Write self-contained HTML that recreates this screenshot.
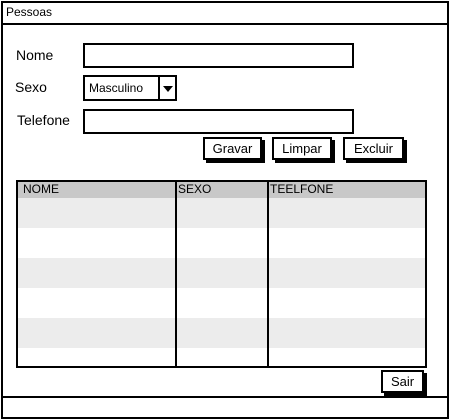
<!DOCTYPE html>
<html><head><style>
*{margin:0;padding:0;box-sizing:border-box}
body{width:450px;height:420px;background:#fff;position:relative;font-family:"Liberation Sans",sans-serif;overflow:hidden;color:#000}
.a{position:absolute}
.box{position:absolute;border:2px solid #000;background:#fff}
.btn{position:absolute;border:2px solid #000;background:#fff;box-shadow:3px 3px 0 #000;font-size:13px;text-align:center;line-height:19px}
.lbl{position:absolute;font-size:14px}
.th{position:absolute;font-size:12px;top:182px}
</style></head><body>
<div class="box" style="left:1px;top:1px;width:448px;height:418px"></div>
<div class="a" style="left:1px;top:23px;width:448px;height:2px;background:#000"></div>
<div class="a" style="left:6px;top:5px;font-size:12px">Pessoas</div>

<div class="lbl" style="left:16px;top:47px">Nome</div>
<div class="box" style="left:83px;top:43px;width:271px;height:25px"></div>
<div class="lbl" style="left:15px;top:79px">Sexo</div>
<div class="box" style="left:83px;top:75px;width:94px;height:26px"></div>
<div class="a" style="left:89px;top:81px;font-size:12px">Masculino</div>
<div class="a" style="left:158px;top:76px;width:2px;height:24px;background:#000"></div>
<div class="a" style="left:163px;top:86px;width:0;height:0;border-left:5px solid transparent;border-right:5px solid transparent;border-top:6px solid #000"></div>
<div class="lbl" style="left:17px;top:112px">Telefone</div>
<div class="box" style="left:83px;top:109px;width:271px;height:25px"></div>

<div class="btn" style="left:203px;top:137px;width:59px;height:23px">Gravar</div>
<div class="btn" style="left:272px;top:137px;width:60px;height:23px">Limpar</div>
<div class="btn" style="left:343px;top:137px;width:61px;height:23px">Excluir</div>

<div class="box" style="left:16px;top:180px;width:411px;height:188px;overflow:hidden">
 <div class="a" style="left:0;top:0;width:409px;height:16px;background:#c8c8c8"></div>
 <div class="a" style="left:0;top:16px;width:409px;height:30px;background:#ececec"></div>
 <div class="a" style="left:0;top:76px;width:409px;height:30px;background:#ececec"></div>
 <div class="a" style="left:0;top:136px;width:409px;height:30px;background:#ececec"></div>
 <div class="a" style="left:157px;top:0;width:2px;height:186px;background:#000"></div>
 <div class="a" style="left:249px;top:0;width:2px;height:186px;background:#000"></div>
</div>
<div class="th" style="left:23px">NOME</div>
<div class="th" style="left:178px">SEXO</div>
<div class="th" style="left:270px">TEELFONE</div>

<div class="btn" style="left:381px;top:370px;width:43px;height:23px">Sair</div>
<div class="a" style="left:1px;top:396px;width:448px;height:2px;background:#000"></div>
</body></html>
